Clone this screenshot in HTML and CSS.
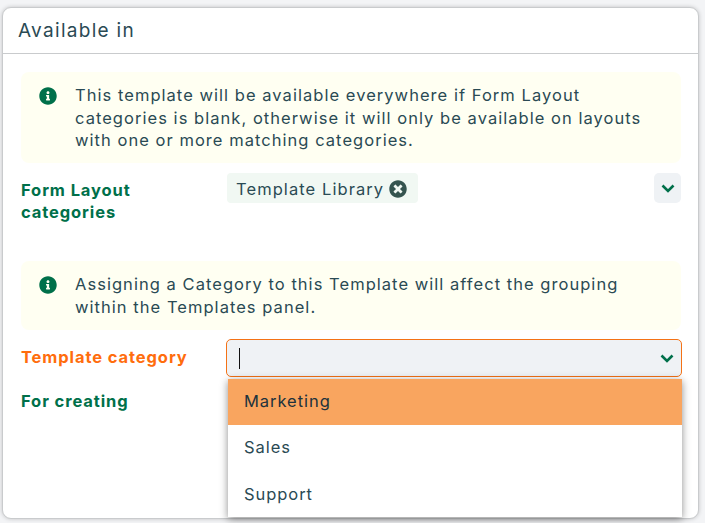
FILE: index.html
```html
<!DOCTYPE html>
<html lang="en">
<head>
  <meta charset="UTF-8">
  <title>Available in</title>
  <link rel="stylesheet" href="styles.css">
</head>
<body>
  <div class="card">
    <h2 class="card-title">Available in</h2>
    <div class="card-body">
      <div class="notice notice-first">
        <svg class="info-icon" viewBox="0 0 512 512"><path d="M256 8C119 8 8 119 8 256s111 248 248 248 248-111 248-248S393 8 256 8zm0 110c23.200 0 42 18.800 42 42s-18.800 42-42 42-42-18.800-42-42 18.800-42 42-42zm56 254c0 6.600-5.400 12-12 12h-88c-6.600 0-12-5.400-12-12v-24c0-6.600 5.400-12 12-12h12v-64h-12c-6.600 0-12-5.400-12-12v-24c0-6.600 5.400-12 12-12h64c6.600 0 12 5.400 12 12v100h12c6.600 0 12 5.400 12 12v24z"/></svg>
        <p>This template will be available everywhere if Form Layout categories is blank, otherwise it will only be available on layouts with one or more matching categories.</p>
      </div>

      <div class="field field-tags">
        <label class="field-label">Form Layout categories</label>
        <div class="tags-control">
          <span class="tag">Template Library
            <svg class="tag-remove" viewBox="0 0 512 512"><path d="M256 8C119 8 8 119 8 256s111 248 248 248 248-111 248-248S393 8 256 8zm121.600 313.100c4.700 4.700 4.700 12.300 0 17L338 377.600c-4.700 4.700-12.300 4.700-17 0L256 312l-65.100 65.600c-4.700 4.700-12.300 4.700-17 0L134.400 338c-4.700-4.700-4.700-12.300 0-17l65.600-65-65.600-65.100c-4.700-4.700-4.700-12.300 0-17l39.600-39.600c4.700-4.700 12.300-4.700 17 0l65 65.700 65.100-65.600c4.700-4.700 12.300-4.700 17 0l39.600 39.600c4.700 4.700 4.700 12.300 0 17L312 256l65.600 65.100z"/></svg>
          </span>
          <span class="tags-toggle">
            <svg class="chevron" viewBox="0 0 14 9"><path d="M1.500 1.500 7 7l5.500-5.500"/></svg>
          </span>
        </div>
      </div>

      <div class="notice notice-second">
        <svg class="info-icon" viewBox="0 0 512 512"><path d="M256 8C119 8 8 119 8 256s111 248 248 248 248-111 248-248S393 8 256 8zm0 110c23.200 0 42 18.800 42 42s-18.800 42-42 42-42-18.800-42-42 18.800-42 42-42zm56 254c0 6.600-5.400 12-12 12h-88c-6.600 0-12-5.400-12-12v-24c0-6.600 5.400-12 12-12h12v-64h-12c-6.600 0-12-5.400-12-12v-24c0-6.600 5.400-12 12-12h64c6.600 0 12 5.400 12 12v100h12c6.600 0 12 5.400 12 12v24z"/></svg>
        <p>Assigning a Category to this Template will affect the grouping within the Templates panel.</p>
      </div>

      <div class="field field-select">
        <label class="field-label field-label-active">Template category</label>
        <div class="select-wrap">
          <div class="select-box">
            <span class="caret"></span>
            <svg class="chevron" viewBox="0 0 14 9"><path d="M1.500 1.500 7 7l5.500-5.500"/></svg>
          </div>
          <ul class="menu">
            <li class="menu-item menu-item-active">Marketing</li>
            <li class="menu-item">Sales</li>
            <li class="menu-item">Support</li>
          </ul>
        </div>
      </div>

      <div class="field">
        <label class="field-label">For creating</label>
      </div>
    </div>
  </div>
</body>
</html>
```

FILE: styles.css
```css
* {
  box-sizing: border-box;
  margin: 0;
  padding: 0;
}

html, body {
  height: 100%;
  overflow: hidden;
}

body {
  font-family: Inter, "Open Sans", sans-serif;
  background: #f3f4f6;
  color: #2a4a54;
  padding: 7px 6px 4px 2px;
}

.card {
  height: 512px;
  background: #ffffff;
  border: 1px solid #c9cbcd;
  border-radius: 9px;
  box-shadow: 0 0 4px rgba(0, 0, 0, 0.2);
}

.card-title {
  height: 46px;
  padding: 0 15px;
  border-bottom: 1px solid #c9cbcd;
  font-size: 19px;
  font-weight: 400;
  line-height: 46px;
  letter-spacing: 1.3px;
}

.card-body {
  padding: 18px 17px 0 18px;
}

.notice {
  display: flex;
  background: #fffff2;
  border-radius: 8px;
  padding: 12px 18px;
  font-size: 16.500px;
  line-height: 22.500px;
  letter-spacing: 1.04px;
}

.notice-first {
  height: 91px;
}

.notice-second {
  height: 69px;
}

.info-icon {
  flex: none;
  width: 18px;
  height: 18px;
  margin: 3px 18px 0 0;
  fill: #00704a;
}

.field {
  display: flex;
}

.field-label {
  flex: none;
  width: 205px;
  font-size: 16.500px;
  font-weight: 700;
  line-height: 22px;
  letter-spacing: 0.9px;
  color: #00704a;
}

.field-tags {
  height: 98px;
  padding-top: 10px;
}

.field-tags .field-label {
  padding-top: 6px;
  width: 140px;
  margin-right: 66px;
}

.tags-control {
  flex: 1;
  display: flex;
  justify-content: space-between;
  align-items: flex-start;
}

.tag {
  display: flex;
  align-items: center;
  gap: 5px;
  height: 30px;
  padding: 1px 11px 0 9px;
  background: #f1f8f3;
  border-radius: 4px;
  font-size: 16.500px;
  letter-spacing: 1.08px;
}

.tag-remove {
  width: 18px;
  height: 18px;
  fill: #35544f;
}

.tags-toggle {
  display: flex;
  align-items: center;
  justify-content: center;
  width: 27px;
  height: 30px;
  background: #eff2f5;
  border-radius: 5px;
}

.chevron {
  width: 14px;
  height: 9px;
  fill: none;
  stroke: #00704a;
  stroke-width: 2.600;
}

.field-select {
  height: 60px;
  padding-top: 9px;
}

.field-select .field-label {
  line-height: 37px;
}

.field-label-active {
  color: #ff6d0d;
}

.select-wrap {
  flex: 1;
  position: relative;
  margin-right: -1px;
}

.select-box {
  display: flex;
  align-items: center;
  justify-content: space-between;
  height: 38px;
  padding: 0 7px 0 12px;
  background: #eff2f5;
  border: 1px solid #f47216;
  border-radius: 5px;
}

.caret {
  width: 1px;
  height: 21px;
  background: #111111;
}

.menu {
  position: absolute;
  top: 40px;
  left: 2px;
  right: 0;
  list-style: none;
  background: #ffffff;
  box-shadow: 0 2px 8px rgba(0, 0, 0, 0.45);
  z-index: 2;
}

.menu-item {
  height: 46px;
  padding: 0 16px;
  font-size: 16.500px;
  line-height: 44px;
  letter-spacing: 0.95px;
}

.menu-item-active {
  background: #f9a55f;
  color: #20323c;
}

.menu-item:last-child {
  line-height: 46px;
}
```
